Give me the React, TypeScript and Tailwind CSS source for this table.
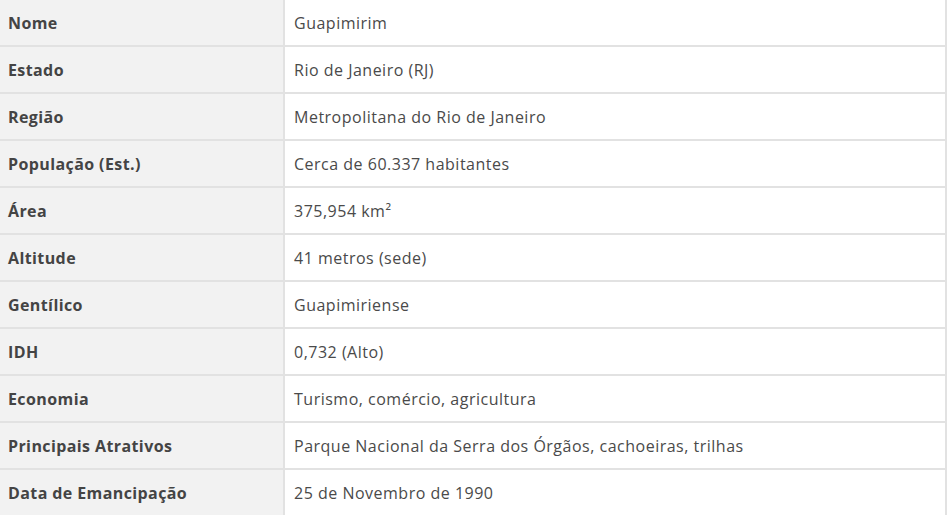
import React from "react";

const rows: [string, string][] = [
  ["Nome", "Guapimirim"],
  ["Estado", "Rio de Janeiro (RJ)"],
  ["Região", "Metropolitana do Rio de Janeiro"],
  ["População (Est.)", "Cerca de 60.337 habitantes"],
  ["Área", "375,954 km²"],
  ["Altitude", "41 metros (sede)"],
  ["Gentílico", "Guapimiriense"],
  ["IDH", "0,732 (Alto)"],
  ["Economia", "Turismo, comércio, agricultura"],
  ["Principais Atrativos", "Parque Nacional da Serra dos Órgãos, cachoeiras, trilhas"],
  ["Data de Emancipação", "25 de Novembro de 1990"],
];

export default function App() {
  return (
    <div className="w-[947px] h-[515px] overflow-hidden bg-white [font-family:'Open_Sans',sans-serif]">
      <div className="w-[947px] border-r-2 border-[#e2e2e2]">
        {rows.map(([k, v]) => (
          <div key={k} className="flex h-[47px] border-b-2 border-[#e2e2e2]">
            <div className="w-[285px] shrink-0 bg-[#f2f2f2] border-r-2 border-[#e2e2e2] pl-2 flex items-center text-[16px] font-bold tracking-[0.4px] text-[#444]">
              {k}
            </div>
            <div className="flex-1 pl-[9px] flex items-center text-[16px] tracking-[0.5px] text-[#4a4a4a]">
              {v}
            </div>
          </div>
        ))}
      </div>
    </div>
  );
}
